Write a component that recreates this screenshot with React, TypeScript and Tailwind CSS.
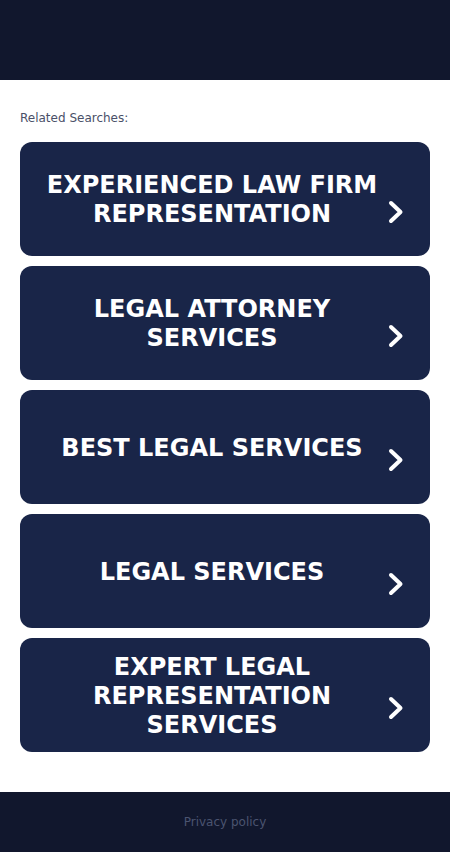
import React from 'react'

const searches = [
  'EXPERIENCED LAW FIRM REPRESENTATION',
  'LEGAL ATTORNEY SERVICES',
  'BEST LEGAL SERVICES',
  'LEGAL SERVICES',
  'EXPERT LEGAL REPRESENTATION SERVICES',
]

function Chevron() {
  return (
    <svg width="16" height="24" viewBox="0 0 16 24" fill="none" className="block">
      <path d="M3 3 L12.5 12 L3 21" stroke="white" strokeWidth="4" strokeLinecap="round" strokeLinejoin="round" />
    </svg>
  )
}

export default function App() {
  return (
    <div className="min-h-[852px] flex flex-col bg-white" style={{ fontFamily: '"DejaVu Sans", sans-serif' }}>
      {/* header */}
      <div className="h-20 bg-[#11172d]" />

      <main className="flex-1 px-5 pt-[29px] pb-10">
        <p className="text-[12px] leading-[18px] text-[#4a5068] mb-[15px]">
          Related Searches:
        </p>
        <div className="flex flex-col gap-[10px]">
          {searches.map((s) => (
            <a
              key={s}
              href="#"
              className="h-[114px] rounded-xl bg-[#192548] flex items-center pl-[24px] pr-[26px]"
            >
              <span className="w-[336px] pt-[2px] text-center text-white font-bold text-[24px] leading-[29px]">
                {s}
              </span>
              <span className="ml-2 pt-[26px]">
                <Chevron />
              </span>
            </a>
          ))}
        </div>
      </main>

      {/* footer */}
      <footer className="h-[60px] bg-[#11172d] flex items-center justify-center">
        <a href="#" className="text-[12px] text-[#4b5470]">Privacy policy</a>
      </footer>
    </div>
  )
}
